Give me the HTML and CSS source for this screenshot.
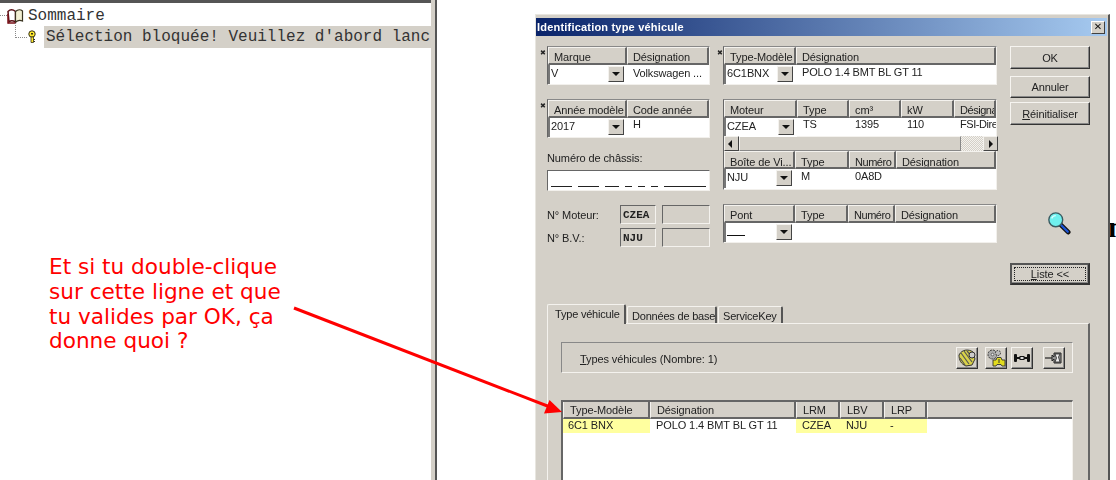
FILE: index.html
```html
<!DOCTYPE html>
<html lang="fr">
<head>
<meta charset="utf-8">
<title>Identification type véhicule</title>
<link rel="stylesheet" href="styles.css">
</head>
<body>
<div class="page">
  <section class="tree">
    <div class="tree-root">
      <svg class="book" width="18" height="16" viewBox="0 0 18 16"><path d="M1 3.500C3 1.500 6 1.500 8.500 3.500L8.500 14C6 12.500 3.500 12.500 2 14Z" fill="#fff" stroke="#5a0f14" stroke-width="1.500"/><path d="M8.500 3.500C11 1 14 1.500 15.500 3L15.500 13C13.500 12 11 12 8.500 14Z" fill="#f2efd2" stroke="#3a3320" stroke-width="1.200"/><path d="M1 6V15H8.500" fill="none" stroke="#7a1018" stroke-width="1.500"/></svg>
      <span>Sommaire</span>
    </div>
    <div class="tree-child">
      <svg class="key" width="10" height="14" viewBox="0 0 10 14"><circle cx="5" cy="4" r="3.200" fill="#ffe92e" stroke="#33301a"/><rect x="4" y="3" width="2" height="1.500" fill="#33301a"/><path d="M4 7H6.500V12.500H4Z" fill="#ffe92e" stroke="#33301a" stroke-width=".8"/><path d="M6.500 9.500H8M6.500 11.500H8" stroke="#33301a"/></svg>
      <div class="tree-sel">Sélection bloquée! Veuillez d'abord lanc</div>
    </div>
    <p class="note">Et si tu double-clique<br>sur cette ligne et que<br>tu valides par OK, ça<br>donne quoi ?</p>
  </section>
  <div class="splitter"></div>
  <section class="content">
    <span class="behind">n</span>
    <div class="dialog">
      <header class="titlebar">
        <h1>Identification type véhicule</h1>
        <button class="close">✕</button>
      </header>
      <div class="form">
        <div class="col-a">
          <div class="tbl req cols-a">
            <div class="hd"><span>Marque</span><span>Désignation</span></div>
            <div class="rw"><div class="combo">V<i></i></div><div class="cell">Volkswagen ...</div></div>
          </div>
          <div class="tbl req cols-b">
            <div class="hd"><span>Année modèle</span><span>Code année</span></div>
            <div class="rw"><div class="combo">2017<i></i></div><div class="cell">H</div></div>
          </div>
          <label class="vin-label">Numéro de châssis:</label>
          <div class="vin">
            <b class="d3"></b><b class="d3"></b><b class="d2"></b><b class="d1"></b><b class="d1"></b><b class="d1"></b><b class="d5"></b>
          </div>
          <div class="code-row"><span>N° Moteur:</span><em>CZEA</em><u></u></div>
          <div class="code-row"><span>N° B.V.:</span><em>NJU</em><u></u></div>
        </div>
        <div class="col-b">
          <div class="tbl req cols-tm">
            <div class="hd"><span>Type-Modèle</span><span>Désignation</span></div>
            <div class="rw"><div class="combo">6C1BNX<i></i></div><div class="cell">POLO 1.4 BMT BL GT 11</div></div>
          </div>
          <div class="tbl cols-mot">
            <div class="hd"><span>Moteur</span><span>Type</span><span>cm³</span><span>kW</span><span class="tight">Désigna</span></div>
            <div class="rw short"><div class="combo">CZEA<i></i></div><div class="cell">TS</div><div class="cell">1395</div><div class="cell">110</div><div class="cell tight">FSI-Dire</div></div>
            <div class="scroll"><button class="sb left"></button><div class="thumb"></div><div class="track"></div><button class="sb right"></button></div>
            <div class="hd gb"><span>Boîte de Vi...</span><span>Type</span><span class="tight">Numéro</span><span>Désignation</span></div>
            <div class="rw gb"><div class="combo">NJU<i></i></div><div class="cell">M</div><div class="cell">0A8D</div><div class="cell"></div></div>
          </div>
          <div class="tbl cols-pont">
            <div class="hd"><span>Pont</span><span>Type</span><span class="tight">Numéro</span><span>Désignation</span></div>
            <div class="rw"><div class="combo blank"><s></s><i></i></div><div class="cell"></div><div class="cell"></div><div class="cell"></div></div>
          </div>
        </div>
        <div class="col-c">
          <button class="btn ok">OK</button>
          <button class="btn cancel">Annuler</button>
          <button class="btn reset"><span class="ul">R</span>éinitialiser</button>
          <svg class="loupe" width="24" height="24" viewBox="0 0 26 26"><path d="M15 15L23 23" stroke="#111" stroke-width="5" stroke-linecap="round"/><path d="M15.500 15.500L22.500 22.500" stroke="#1c55d8" stroke-width="2.500" stroke-linecap="round"/><circle cx="9.500" cy="9.500" r="7.500" fill="#6ff0ee" stroke="#3a5a60" stroke-width="1.500"/><path d="M5 8C6 6 7.500 5 9.500 5" stroke="#d8ffff" stroke-width="1.500" fill="none"/></svg>
          <button class="btn list"><span class="focus"><span class="ul">L</span>iste &lt;&lt;</span></button>
        </div>
      </div>
      <div class="tabs">
        <div class="tab active">Type véhicule</div>
        <div class="tab">Données de base</div>
        <div class="tab">ServiceKey</div>
      </div>
      <div class="panel">
        <div class="group">
          <span class="group-label"><span class="ul">T</span>ypes véhicules (Nombre: 1)</span>
          <div class="tools">
            <button class="tool"><svg width="20" height="20" viewBox="0 0 20 20"><path d="M2 7C5 1 12 1 16 4L18 11 15 17 9 18C4 16 2 12 2 7Z" fill="#d9d24a" stroke="#333"/><path d="M4 5L12 16M7 3L15 14M3 10L8 17M10 3L16 10" stroke="#555" stroke-width="1.200"/><circle cx="15" cy="7" r="3" fill="#ccc" stroke="#333"/></svg></button>
            <button class="tool"><svg width="20" height="20" viewBox="0 0 20 20"><circle cx="6.500" cy="6.500" r="4.500" fill="#aaa" stroke="#333" stroke-dasharray="2 1"/><circle cx="6.500" cy="6.500" r="1.300" fill="#eee" stroke="#333" stroke-width=".6"/><circle cx="12" cy="5" r="2.500" fill="#bbb" stroke="#333" stroke-dasharray="1.500 1"/><path d="M7 12H10L11 9.500H15L16 12H19V18H16L15 16.500H11L10 18H7Z" fill="#e2dc1e" stroke="#333" stroke-width=".9"/><path d="M13 11V15" stroke="#333"/></svg></button>
            <button class="tool axle"><svg width="18" height="18" viewBox="0 0 18 18"><rect x="1" y="5" width="3" height="8" rx="1" fill="#111"/><rect x="14" y="5" width="3" height="8" rx="1" fill="#111"/><path d="M4 9H14" stroke="#111" stroke-width="2"/><rect x="7" y="7.500" width="4" height="3" fill="#ddd" stroke="#111"/></svg></button>
            <button class="tool spaced"><svg width="20" height="18" viewBox="0 0 20 18"><path d="M1 9H8" stroke="#222" stroke-width="1.200"/><path d="M8 6L10 8V4H17V14H10V10L8 12Z" fill="#999" stroke="#222"/><path d="M11 5H16L14.500 8 16 13H11L12.500 9Z" fill="#eee" stroke="#222" stroke-width=".8"/></svg></button>
          </div>
        </div>
        <div class="list-table">
          <div class="lhd"><span>Type-Modèle</span><span>Désignation</span><span>LRM</span><span>LBV</span><span>LRP</span><span></span></div>
          <div class="lrow"><span class="hl">6C1 BNX</span><span>POLO 1.4 BMT BL GT 11</span><span class="hl">CZEA</span><span class="hl">NJU</span><span class="hl">-</span><span></span></div>
        </div>
      </div>
    </div>
  </section>
  <svg class="arrow" width="1116" height="480" viewBox="0 0 1116 480"><path d="M294 308L550 407" stroke="#f00" stroke-width="3" fill="none"/><path d="M562 412L544 413.500 549.500 400Z" fill="#f00"/></svg>
</div>
</body>
</html>
```
FILE: styles.css
```css
* { box-sizing: border-box; }
html, body { margin: 0; height: 100%; }
body { background: #fff; overflow: hidden; }
.page { position: relative; display: flex; width: 1116px; height: 480px; overflow: hidden; }

/* left tree pane */
.tree { position: relative; width: 431px; height: 480px; border-top: 3px solid #555; background: #fff; font: 16px/20px "Liberation Mono", monospace; color: #333; overflow: hidden; white-space: nowrap; }
.tree::before { content: ""; position: absolute; left: 0; right: 0; top: -3px; height: 2px; background: #d4d0c8; }
.tree-root { display: flex; align-items: center; height: 22px; padding: 3px 0 0 7px; }
.tree-root::before { content: ""; position: absolute; left: 0; top: 12px; width: 7px; border-top: 1px dotted #888; }
.tree-root span { margin-left: 3px; }
.book { flex: none; }
.tree-child { position: relative; display: flex; align-items: center; height: 22px; padding-left: 27px; margin-top: 1px; }
.tree-child::before { content: ""; position: absolute; left: 15px; top: -3px; width: 11px; height: 14px; border-left: 1px dotted #888; border-bottom: 1px dotted #888; }
.tree-sel { margin-left: 7px; flex: 1; height: 22px; padding: 1px 0 0 2px; background: #d4d0c8; overflow: hidden; }
.note { position: absolute; left: 49px; top: 252px; margin: 0; color: #f00; font: 21.6px/24.8px "DejaVu Sans", sans-serif; }

/* splitter */
.splitter { width: 6px; height: 480px; background: #d4d0c8; border-right: 2px solid #555; }

/* desktop behind dialog */
.content { position: relative; flex: 1; height: 480px; background: #fff; }
.behind { position: absolute; left: 671px; top: 212px; font: bold 30px/30px "Liberation Serif", serif; color: #000; }
.dialog { position: absolute; left: 98px; top: 14px; width: 575px; height: 480px; background: #d4d0c8; border-top: 1px solid #e8e6e0; border-left: 1px solid #e8e6e0; border-right: 2px solid #555; padding: 3px 0 0 0; font: 11px/14px "Liberation Sans", sans-serif; letter-spacing: -.1px; color: #222; filter: blur(.3px); }
.titlebar { display: flex; align-items: center; justify-content: space-between; width: 571px; height: 18px; padding: 0 2px 0 1px; background: linear-gradient(90deg, #0a246a, #a6caf0); }
.titlebar h1 { margin: 0; color: #fff; font: bold 11px/14px "Liberation Sans", sans-serif; letter-spacing: .2px; }
.close { display: block; width: 14px; height: 13px; padding: 0; background: #d4d0c8; border: 1px solid; border-color: #fff #404040 #404040 #fff; font: bold 10px/10px "DejaVu Sans", sans-serif; color: #111; }

/* top form */
.form { display: flex; gap: 13px; padding: 10px 0 0 11px; }
.col-a { width: 163px; }
.col-b { width: 274px; }
.col-c { width: 80px; display: flex; flex-direction: column; }

/* header + row tables */
.tbl { position: relative; background: #fff; border: 1px solid; border-color: #888 #f2f0ec #f2f0ec #666; margin-bottom: 14px; }
.tbl.req::before { content: "✖"; position: absolute; left: -8px; top: 2px; font: 7px/8px "DejaVu Sans", sans-serif; color: #222; }
.col-b .tbl.req::before { left: -7px; }
.hd, .rw, .scroll { display: grid; }
.hd { height: 18px; background: #d4d0c8; }
.hd span { padding: 2px 0 0 5px; border-top: 1px solid #f4f2ee; border-left: 1px solid #f4f2ee; border-right: 2px solid #666; border-bottom: 2px solid #666; white-space: nowrap; overflow: hidden; }
.hd .tight, .cell.tight { letter-spacing: -.45px; }
.hd.gb span { padding-top: 3px; }
.rw { height: 19px; }
.rw.short { height: 18px; }
.rw.gb .cell { padding-top: 1px; }
.cell { padding: 0 0 0 6px; white-space: nowrap; overflow: hidden; line-height: 13px; letter-spacing: -.15px; }
.cols-a .cell { padding-top: 2px; }
.cols-tm .cell { padding-top: 1px; }
.combo { position: relative; padding: 1px 0 0 1px; line-height: 14px; height: 19px; background: #fff; border-left: 2px solid #777; }
.combo i { position: absolute; right: 3px; top: 1px; width: 16px; height: 16px; background: #d4d0c8; border: 1px solid; border-color: #f4f2ee #444 #444 #f4f2ee; }
.combo i::after { content: ""; position: absolute; left: 3px; top: 5px; border: 4px solid transparent; border-top: 4px solid #111; border-bottom: 0; }
.combo s { display: block; width: 18px; height: 12px; border-bottom: 1px solid #111; }
.cols-a .hd, .cols-a .rw { grid-template-columns: 79px 1fr; }
.cols-b .hd, .cols-b .rw { grid-template-columns: 79px 1fr; }
.cols-tm .hd, .cols-tm .rw { grid-template-columns: 72px 1fr; }
.cols-mot { margin-bottom: 14px; height: 91px; }
.cols-mot .hd, .cols-mot .rw { grid-template-columns: 73px 52px 52px 53px 1fr; }
.cols-mot .hd.gb, .cols-mot .rw.gb { grid-template-columns: 71px 54px 47px 1fr; }
.cols-pont .hd, .cols-pont .rw { grid-template-columns: 71px 53px 47px 1fr; }
.cols-pont { margin-bottom: 0; }
.scroll { grid-template-columns: 15px 222px 22px 15px; height: 15px; }
.sb { position: relative; padding: 0; background: #d4d0c8; border: 1px solid; border-color: #f4f2ee #444 #444 #f4f2ee; }
.sb::after { content: ""; position: absolute; top: 3px; border: 4px solid transparent; }
.sb.left::after { left: 3px; border-right: 4px solid #111; border-left: 0; }
.sb.right::after { left: 5px; border-left: 4px solid #111; border-right: 0; }
.thumb { background: #d4d0c8; border: 1px solid; border-color: #f4f2ee #888 #888 #f4f2ee; }
.track { background: repeating-conic-gradient(#f4f2ee 0 25%, #d4d0c8 0 50%) 0 0 / 2px 2px; }

/* chassis + codes */
.vin-label { display: block; height: 20px; margin-top: -2px; line-height: 16px; }
.vin { display: flex; align-items: flex-end; gap: 6px; height: 21px; margin-bottom: 14px; padding: 0 3px 3px 3px; background: #fff; border: 1px solid; border-color: #666 #f2f0ec #f2f0ec #666; }
.vin b { display: block; height: 1px; background: #222; }
.d3 { width: 21px; }
.d2 { width: 14px; }
.d1 { width: 7px; }
.d5 { flex: 1; }
.code-row { display: flex; align-items: center; height: 19px; margin-bottom: 4px; }
.code-row span { width: 73px; }
.code-row em, .code-row u { display: block; height: 19px; border: 1px solid; border-color: #666 #f4f2ee #f4f2ee #666; }
.code-row em { width: 36px; padding: 3px 0 0 2px; font: bold 11px/12px "Liberation Mono", monospace; font-style: normal; letter-spacing: 0; }
.code-row u { width: 48px; margin-left: 6px; }

/* buttons */
.btn { display: block; width: 80px; padding: 0; background: #d4d0c8; border: 1px solid; border-color: #f6f4f0 #333 #333 #f6f4f0; box-shadow: inset -1px -1px 0 #888; font: 11px/14px "Liberation Sans", sans-serif; letter-spacing: -.1px; color: #222; }
.ok { height: 23px; margin-bottom: 7px; }
.cancel { height: 22px; margin-bottom: 4px; }
.reset { height: 23px; }
.loupe { align-self: flex-start; margin: 86px 0 28px 37px; }
.list { height: 22px; border: 2px solid #333; border-top-color: #555; border-left-color: #555; padding: 2px; }
.focus { display: block; height: 14px; line-height: 13px; border: 1px dotted #222; }
.ul { text-decoration: underline; }

/* tabs */
.tabs { display: flex; align-items: flex-end; height: 21px; margin: 17px 0 0 11px; letter-spacing: -.2px; }
.tab { height: 17px; padding: 2px 0 0 4px; margin-right: 1px; width: 90px; background: #d4d0c8; border-top: 1px solid #f4f2ee; border-left: 1px solid #f4f2ee; border-right: 2px solid #555; white-space: nowrap; border-radius: 2px 2px 0 0; }
.tab.active { position: relative; z-index: 1; width: 79px; height: 20px; padding: 2px 0 0 7px; margin-bottom: -1px; }
.tab:last-child { width: 65px; }
.panel { width: 543px; height: 200px; margin-left: 11px; padding: 18px 0 0 13px; border-top: 1px solid #f4f2ee; border-left: 1px solid #f4f2ee; border-right: 2px solid #666; }

.group { display: flex; align-items: center; justify-content: space-between; width: 512px; height: 31px; padding: 0 7px 0 18px; border: 1px solid; border-color: #888 #f4f2ee #f4f2ee #888; }
.group-label { margin-top: 3px; }
.tools { display: flex; gap: 7px; }
.tool { display: grid; place-items: center; width: 22px; height: 22px; padding: 0; background: #d4d0c8; border: 1px solid; border-color: #f4f2ee #333 #333 #f4f2ee; box-shadow: inset -1px -1px 0 #888; }
.tool.axle { margin-left: -3px; }
.tool.spaced { margin-left: 3px; }

.list-table { width: 512px; height: 90px; margin-top: 27px; background: #fff; border: 2px solid #666; border-right: 1px solid #f4f2ee; border-bottom: 0; }
.lhd, .lrow { display: grid; grid-template-columns: 87px 146px 44px 44px 43px 1fr; }
.lhd { height: 17px; background: #d4d0c8; }
.lhd span { padding: 1px 0 0 6px; border-right: 2px solid #666; border-bottom: 2px solid #666; border-left: 1px solid #f4f2ee; white-space: nowrap; }
.lhd span:last-child { border-right: 0; }
.lrow { height: 14px; }
.lrow span { padding-left: 6px; line-height: 12px; white-space: nowrap; }
.lrow .hl { background: #ffff9f; }
.lrow .hl:first-child { padding-left: 5px; }

.arrow { position: absolute; left: 0; top: 0; pointer-events: none; }
```
